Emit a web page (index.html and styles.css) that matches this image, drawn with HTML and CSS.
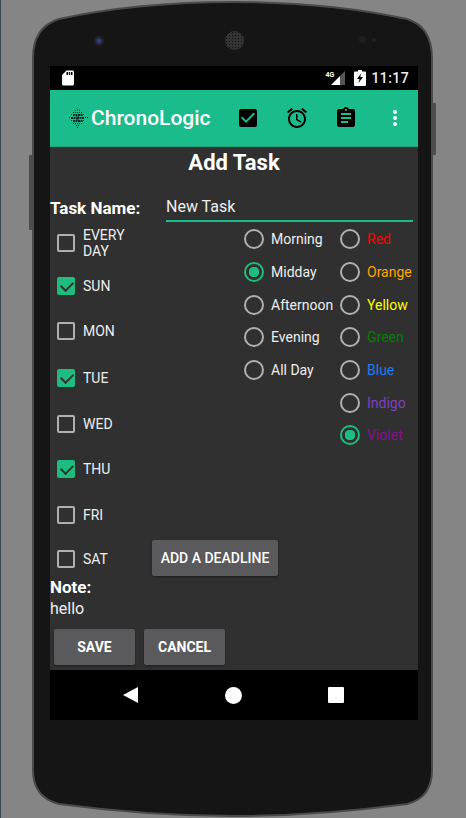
FILE: index.html
```html
<!DOCTYPE html>
<html lang="en">
<head>
  <meta charset="UTF-8" />
  <meta name="viewport" content="width=device-width, initial-scale=1.0" />
  <title>ChronoLogic - Add Task</title>
  <link rel="stylesheet" href="styles.css">
</head>
<body>

  <div class="device">
    <svg class="shell" width="410" height="818" viewBox="0 0 410 818">
      <rect class="key" x="402" y="103" width="5" height="52" rx="1" />
      <rect class="key" x="0" y="155" width="5" height="75" rx="1" />
      <path class="case" d="M4 58 C4 36 14 24 30 19 C90 6 150 2 204 2 C258 2 318 6 378 19 C394 24 403 36 403 58 L403 770 C403 790 394 800 378 804 C318 812 258 816 204 816 C150 816 90 812 30 804 C14 800 4 790 4 770 Z" />
    </svg>

    <div class="earpiece">
      <span class="camera"></span>
      <span class="speaker"></span>
      <span class="sensors"><i></i><i></i></span>
    </div>

    <div class="screen">
      <div class="status-bar">
        <svg class="sd" width="18" height="18" viewBox="0 0 24 24"><path d="M18 2h-8L4.02 8 4 20c0 1.100.9 2 2 2h12c1.100 0 2-.9 2-2V4c0-1.100-.9-2-2-2zm-6 6h-2V4h2v4zm3 0h-2V4h2v4zm3 0h-2V4h2v4z" /></svg>
        <span class="net">4G</span>
        <svg class="signal" width="14" height="14" viewBox="0 0 14 14"><path class="signal-off" d="M14 0v14H9V5z" /><path d="M9 5v9H0z" /></svg>
        <svg class="battery" width="12" height="16" viewBox="0 0 12 16"><path d="M4 0h4v1.500h3a1 1 0 0 1 1 1V15a1 1 0 0 1-1 1H1a1 1 0 0 1-1-1V2.500a1 1 0 0 1 1-1h3z" /><path class="bolt" d="M7 3.500 3 9h2.500L4.500 13 9 7H6.300z" /></svg>
        <span class="clock">11:17</span>
      </div>

      <header class="app-bar">
        <svg class="logo" width="20" height="20" viewBox="0 0 20 20"><g id="dots"></g>
          <path d="M9 1h1v1H9zM7 2h1v1H7zM11 2h1v1h-1zM5 4h1v1H5zM7 4h1v1H7zM9 4h1v1H9zM11 4h1v1h-1zM13 4h1v1h-1zM3 6h1v1H3zM5 6h2v2H5zM7.500 6h2v2h-2zM10 6h2v2h-2zM12.500 6h2v2h-2zM15 6h1v1h-1zM1 9h1v1H1zM3 9h2v2H3zM5.500 9h2v2h-2zM8 8.500h3v3H8zM11.500 9h2v2h-2zM14 9h2v2h-2zM17 9h1v1h-1zM19 9h1v1h-1zM3 12h1v1H3zM5 12h2v2H5zM7.500 12h2v2h-2zM10 12h2v2h-2zM12.500 12h2v2h-2zM15 12h1v1h-1zM5 15h1v1H5zM7 15h1v1H7zM9 15h1v1H9zM11 15h1v1h-1zM13 15h1v1h-1zM8 17h1v1H8zM10 17h1v1h-1zM9 19h1v1H9z" />
        </svg>
        <span class="app-title">ChronoLogic</span>
        <div class="actions">
          <svg width="24" height="24" viewBox="0 0 24 24"><path d="M19 3H5c-1.110 0-2 .9-2 2v14c0 1.100.89 2 2 2h14c1.110 0 2-.9 2-2V5c0-1.100-.89-2-2-2zm-9 14l-5-5 1.410-1.410L10 14.170l7.590-7.590L19 8l-9 9z" /></svg>
          <svg width="24" height="24" viewBox="0 0 24 24"><path d="M22 5.720l-4.600-3.860-1.290 1.530 4.600 3.860L22 5.720zM7.880 3.390L6.600 1.860 2 5.710l1.290 1.530 4.590-3.850zM12.500 8H11v6l4.750 2.850.75-1.230-4-2.370V8zM12 4c-4.970 0-9 4.030-9 9s4.030 9 9 9 9-4.030 9-9-4.030-9-9-9zm0 16c-3.870 0-7-3.130-7-7s3.130-7 7-7 7 3.130 7 7-3.130 7-7 7z" /></svg>
          <svg width="24" height="24" viewBox="0 0 24 24"><path d="M19 3h-4.180C14.400 1.840 13.300 1 12 1c-1.300 0-2.400.84-2.820 2H5c-1.100 0-2 .9-2 2v14c0 1.100.9 2 2 2h14c1.100 0 2-.9 2-2V5c0-1.100-.9-2-2-2zm-7 0c.55 0 1 .45 1 1s-.45 1-1 1-1-.45-1-1 .45-1 1-1zm2 14H7v-2h7v2zm3-4H7v-2h10v2zm0-4H7V7h10v2z" /></svg>
          <svg class="more" width="24" height="24" viewBox="0 0 24 24"><path d="M12 8c1.100 0 2-.9 2-2s-.9-2-2-2-2 .9-2 2 .9 2 2 2zm0 2c-1.100 0-2 .9-2 2s.9 2 2 2 2-.9 2-2-.9-2-2-2zm0 6c-1.100 0-2 .9-2 2s.9 2 2 2 2-.9 2-2-.9-2-2-2z" /></svg>
        </div>
      </header>

      <main class="content">
        <h1>Add Task</h1>

        <div class="name-row">
          <label for="task-name">Task Name:</label>
          <input id="task-name" type="text" value="New Task" />
        </div>

        <div class="columns">
          <div class="days">
            <label class="day"><input type="checkbox" />EVERY DAY</label>
            <label class="day"><input type="checkbox" checked />SUN</label>
            <label class="day"><input type="checkbox" />MON</label>
            <label class="day"><input type="checkbox" checked />TUE</label>
            <label class="day"><input type="checkbox" />WED</label>
            <label class="day"><input type="checkbox" checked />THU</label>
            <label class="day"><input type="checkbox" />FRI</label>
            <label class="day"><input type="checkbox" />SAT</label>
          </div>

          <div class="options">
            <div class="radios">
              <div class="radio-group times">
                <label><input type="radio" name="time" />Morning</label>
                <label><input type="radio" name="time" checked />Midday</label>
                <label><input type="radio" name="time" />Afternoon</label>
                <label><input type="radio" name="time" />Evening</label>
                <label><input type="radio" name="time" />All Day</label>
              </div>
              <div class="radio-group colors">
                <label class="red"><input type="radio" name="color" />Red</label>
                <label class="orange"><input type="radio" name="color" />Orange</label>
                <label class="yellow"><input type="radio" name="color" />Yellow</label>
                <label class="green"><input type="radio" name="color" />Green</label>
                <label class="blue"><input type="radio" name="color" />Blue</label>
                <label class="indigo"><input type="radio" name="color" />Indigo</label>
                <label class="violet"><input type="radio" name="color" checked />Violet</label>
              </div>
            </div>
            <button class="btn deadline" type="button">ADD A DEADLINE</button>
          </div>
        </div>

        <div class="note">
          <strong>Note:</strong>
          <span>hello</span>
        </div>

        <div class="form-actions">
          <button class="btn bold" type="button">SAVE</button>
          <button class="btn bold" type="button">CANCEL</button>
        </div>
      </main>

      <nav class="nav-bar">
        <span class="nav-back"></span>
        <span class="nav-home"></span>
        <span class="nav-recent"></span>
      </nav>
    </div>
  </div>

</body>
</html>
```

FILE: styles.css
```css
* {
  box-sizing: border-box;
}

body {
  margin: 0;
  height: 818px;
  overflow: hidden;
  background-color: #858585;
  border-left: 1px solid #3c4650;
  font-family: Roboto, sans-serif;
  color: #fff;
}

.device {
  position: relative;
  width: 410px;
  height: 818px;
  margin-left: 28px;
  padding: 0 0 0 21px;
}

.shell {
  position: absolute;
  top: 0;
  left: 0;
}

.case {
  fill: #151515;
  stroke: #4a4a4a;
  stroke-width: 2;
}

.key {
  fill: #4d4d4d;
}

.earpiece {
  position: relative;
  height: 66px;
  width: 368px;
}

.camera {
  position: absolute;
  left: 44px;
  top: 36px;
  width: 10px;
  height: 10px;
  border-radius: 50%;
  background: radial-gradient(circle at 50% 50%, #3b4a8c 0, #1c1c28 60%, #444 100%);
}

.speaker {
  position: absolute;
  left: 175px;
  top: 31px;
  width: 19px;
  height: 19px;
  border-radius: 50%;
  background-color: #333;
  background-image: radial-gradient(#111 35%, transparent 40%);
  background-size: 3px 3px;
}

.sensors {
  position: absolute;
  left: 309px;
  top: 36px;
  display: flex;
  align-items: center;
  gap: 6px;
}

.sensors i {
  display: block;
  width: 7px;
  height: 7px;
  border-radius: 50%;
  background-color: #1f1f1f;
}

.sensors i + i {
  width: 4px;
  height: 4px;
}

.screen {
  position: relative;
  width: 368px;
  height: 654px;
  background-color: #303030;
  display: flex;
  flex-direction: column;
}

.status-bar {
  height: 24px;
  flex: none;
  background-color: #000;
  display: flex;
  align-items: center;
  padding: 0 9px 0 9px;
  fill: #fff;
}

.net {
  margin-left: auto;
  margin-top: -6px;
  font-size: 7px;
  font-weight: 700;
  width: 9px;
  margin-right: -3px;
}

.signal {
  margin-top: 0;
}

.signal-off {
  fill: #555;
}

.battery {
  margin-left: 9px;
}

.bolt {
  fill: #000;
}

.clock {
  margin-left: 5px;
  font-size: 14px;
  font-weight: 500;
  letter-spacing: 0.4px;
  color: #eee;
}

.app-bar {
  height: 57px;
  flex: none;
  background-color: #1abc8c;
  border-bottom: 1px solid #1aa57d;
  display: flex;
  align-items: center;
  padding-left: 18px;
}

.logo {
  fill: #0c2a22;
}

.app-title {
  margin-left: 3px;
  font-size: 21px;
  font-weight: 500;
}

.actions {
  margin-left: auto;
  display: flex;
  align-items: center;
  gap: 25px;
  padding-right: 11px;
}

.actions svg {
  fill: #000;
  display: block;
}

.actions .more {
  fill: #fff;
}

.content {
  flex: 1;
  min-height: 0;
}

h1 {
  margin: 0;
  height: 32px;
  text-align: center;
  font-size: 22px;
  font-weight: 700;
  line-height: 32px;
}

.name-row {
  display: flex;
  align-items: center;
  height: 43px;
  padding-top: 14px;
  padding-right: 5px;
}

.name-row label {
  width: 116px;
  font-size: 17px;
  font-weight: 700;
}

.name-row input {
  flex: 1;
  height: 29px;
  padding: 0;
  border: none;
  border-bottom: 2px solid #1abc8c;
  background: none;
  color: #eee;
  font: 16px Roboto, sans-serif;
}

.columns {
  display: flex;
  height: 357px;
}

.days {
  width: 102px;
  flex: none;
  display: grid;
  grid-template-rows: 41px 45px 46px 47px 45px 45px 47px 41px;
  padding-left: 7px;
}

.day {
  display: flex;
  align-items: center;
  gap: 8px;
  font-size: 14px;
  color: #eee;
}

input[type="checkbox"] {
  appearance: none;
  position: relative;
  flex: none;
  width: 18px;
  height: 18px;
  margin: 0;
  border: 2px solid #b0b0b0;
  border-radius: 2px;
}

input[type="checkbox"]:checked {
  background-color: #1fbc80;
  border-color: #1fbc80;
}

input[type="checkbox"]:checked::after {
  content: "";
  position: absolute;
  left: 3.500px;
  top: 0;
  width: 6px;
  height: 10px;
  border: solid #303030;
  border-width: 0 2px 2px 0;
  transform: rotate(45deg);
}

.options {
  flex: 1;
  display: flex;
  flex-direction: column;
}

.radios {
  display: flex;
  padding-left: 92px;
  padding-top: 1px;
}

.radio-group {
  display: flex;
  flex-direction: column;
}

.times {
  width: 96px;
}

.radio-group label {
  display: flex;
  align-items: center;
  gap: 7px;
  height: 32.700px;
  font-size: 14px;
  color: #eee;
}

input[type="radio"] {
  appearance: none;
  flex: none;
  width: 20px;
  height: 20px;
  margin: 0;
  border: 2px solid #b0b0b0;
  border-radius: 50%;
}

input[type="radio"]:checked {
  border-color: #1fbc80;
  background: radial-gradient(circle, #1fbc80 0, #1fbc80 5px, transparent 5.500px);
}

.colors .red { color: #ff0000; }
.colors .orange { color: #ffa500; }
.colors .yellow { color: #ffff00; }
.colors .green { color: #008000; }
.colors .blue { color: #1a7cf5; }
.colors .indigo { color: #8040c0; }
.colors .violet { color: #8b0f95; }

.btn {
  height: 36px;
  padding: 0;
  border: none;
  border-radius: 2px;
  background-color: #5a5a5c;
  color: #fff;
  font: 500 14px Roboto, sans-serif;
  box-shadow: 0 1px 2px rgba(0, 0, 0, 0.4);
}

.deadline {
  width: 126px;
  margin-top: auto;
  margin-bottom: 3px;
}

.note {
  display: flex;
  flex-direction: column;
}

.note strong {
  font-size: 17px;
  line-height: 20px;
  margin-top: -2px;
}

.note span {
  font-size: 16px;
  line-height: 24px;
  color: #eee;
}

.form-actions {
  display: flex;
  gap: 9px;
  padding-left: 4px;
  margin-top: 8px;
}

.form-actions .btn {
  width: 81px;
}

.bold {
  font-weight: 700;
}

.nav-bar {
  height: 50px;
  flex: none;
  background-color: #000;
  display: flex;
  align-items: center;
  padding-left: 73px;
}

.nav-back {
  width: 0;
  height: 0;
  border-style: solid;
  border-width: 8.500px 15px 8.500px 0;
  border-color: transparent #fff transparent transparent;
}

.nav-home {
  width: 17px;
  height: 17px;
  margin-left: 87px;
  border-radius: 50%;
  background-color: #fff;
}

.nav-recent {
  width: 16px;
  height: 16px;
  margin-left: 86px;
  border-radius: 1px;
  background-color: #fff;
}
```
